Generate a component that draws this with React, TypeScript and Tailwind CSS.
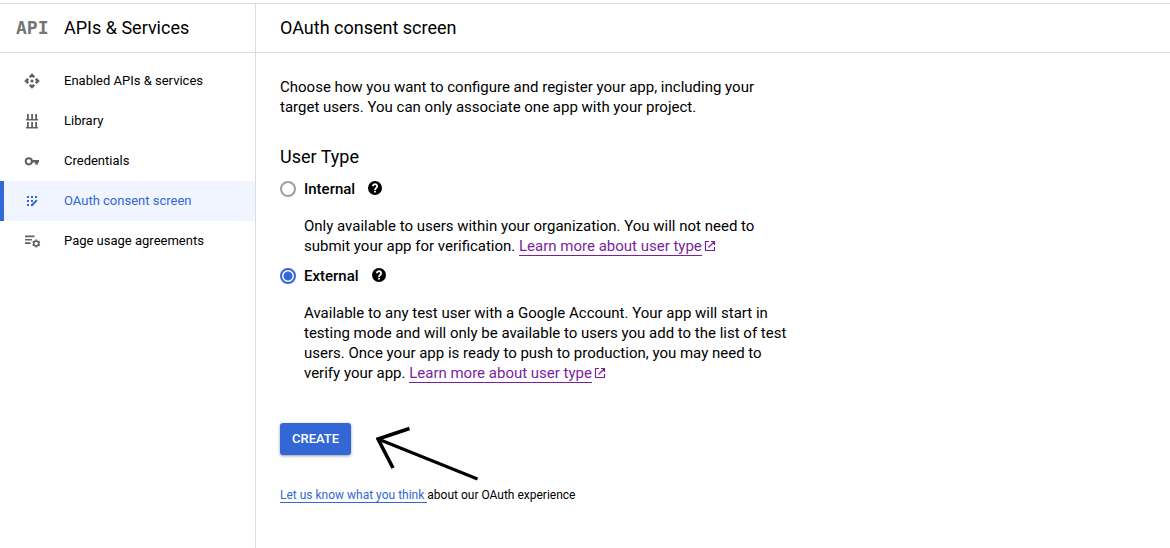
import { useState, type ReactNode } from "react";

function ApiIcon() {
  return (
    <svg width="16" height="16" viewBox="0 0 16 16" fill="currentColor" aria-hidden="true">
      <path d="M8 .2 11.100 3.200 9.600 5.100 8 3.900 6.400 5.100 4.900 3.200zM8 15.800 11.100 12.800 9.600 10.900 8 12.100 6.400 10.900 4.900 12.800zM.2 8 3.200 4.900 5.100 6.400 3.900 8 5.100 9.600 3.200 11.100zM15.800 8 12.800 4.900 10.900 6.400 12.100 8 10.900 9.600 12.800 11.100z" />
      <circle cx="8" cy="8" r="1.6" />
    </svg>
  );
}

function LibraryIcon() {
  return (
    <svg width="16" height="16" viewBox="0 0 16 16" fill="currentColor" aria-hidden="true">
      <path d="M2 6h12v1.400H2zM3 1h1.800v5H3zM7.200 1H9v5H7.200zM11.200 1H13v5h-1.800zM2 14h12v1.400H2zM3 9h1.800v5H3zM7.200 9H9v5H7.200zM11.200 9H13v5h-1.800z" />
    </svg>
  );
}

function KeyIcon() {
  return (
    <svg width="16" height="16" viewBox="0 0 16 16" aria-hidden="true">
      <circle cx="4.8" cy="8.3" r="3.1" fill="none" stroke="currentColor" strokeWidth="2" />
      <path d="M7.6 7H15v2.600h-1v2h-2.800v-2H7.600z" fill="currentColor" />
    </svg>
  );
}

function ConsentIcon() {
  return (
    <svg width="16" height="16" viewBox="0 0 16 16" fill="currentColor" aria-hidden="true">
      <path d="M3 3h2v2H3zM7 3h2v2H7zM11 3h2v2h-2zM3 7h2v2H3zM7 7h2v2H7zM3 11h2v2H3zM7 13.200v-1.800L12.200 6.400l1.400 1.400L8.500 13.200z" />
    </svg>
  );
}

function AgreementsIcon() {
  return (
    <svg width="18" height="16" viewBox="0 0 18 16" aria-hidden="true">
      <path d="M1 2.500h9.500v1.800H1zM1 6h7v1.600H1zM1 9.300h5.500v1.700H1z" fill="currentColor" />
      <g fill="none" stroke="currentColor">
        <circle cx="12.2" cy="10.5" r="2.5" strokeWidth="1.6" />
        <path
          d="M12.2 6.400v1.400M12.2 13.200v1.400M8.650 8.450l1.200.7M14.550 11.850l1.200.7M8.650 12.550l1.200-.7M14.550 9.150l1.200-.7"
          strokeWidth="1.8"
        />
      </g>
    </svg>
  );
}

function HelpIcon() {
  return (
    <svg width="14" height="14" viewBox="0 0 14 14" aria-hidden="true">
      <circle cx="7" cy="7" r="7" fill="currentColor" />
      <path
        d="M4.9 5.300a2.100 2.100 0 1 1 3.300 1.700C7.400 7.600 7 7.900 7 8.900"
        fill="none"
        stroke="white"
        strokeWidth="1.8"
      />
      <path d="M6.100 9.800h1.800v1.800H6.100z" fill="white" />
    </svg>
  );
}

function ExternalIcon() {
  return (
    <svg
      width="12"
      height="12"
      viewBox="0 0 12 12"
      fill="none"
      stroke="#7b1fa2"
      strokeWidth="1.2"
      className="ml-[2px] inline-block align-[-1px]"
      aria-hidden="true"
    >
      <path d="M5 1.500H1.500v9h9V7M7 1.500h3.500V5M10.500 1.500l-6 6" />
    </svg>
  );
}

const navItems: { label: string; icon: ReactNode; active?: boolean }[] = [
  { label: "Enabled APIs & services", icon: <ApiIcon /> },
  { label: "Library", icon: <LibraryIcon /> },
  { label: "Credentials", icon: <KeyIcon /> },
  { label: "OAuth consent screen", icon: <ConsentIcon />, active: true },
  { label: "Page usage agreements", icon: <AgreementsIcon /> },
];

function LearnMore() {
  return (
    <>
      <a href="#user-type" className="border-b border-[#7b1fa2] text-[#7b1fa2]">
        Learn more about user type
      </a>
      <ExternalIcon />
    </>
  );
}

function UserTypeOption(props: {
  value: string;
  label: string;
  checked: boolean;
  onSelect: () => void;
  children: ReactNode;
}) {
  return (
    <div className="mt-[10px]">
      <div className="flex h-5 items-center">
        <input
          type="radio"
          id={props.value}
          name="user-type"
          checked={props.checked}
          onChange={props.onSelect}
          className="size-4 appearance-none rounded-full border-2 border-[#9e9e9e] bg-white checked:border-[#3367d6] checked:bg-[radial-gradient(circle,#3367d6_4px,white_5px)]"
        />
        <label htmlFor={props.value} className="ml-2 font-medium">
          {props.label}
        </label>
        <button type="button" aria-label={"About " + props.label} className="ml-[13px] pb-[2px]">
          <HelpIcon />
        </button>
      </div>
      <p className="mt-[17px] ml-6">{props.children}</p>
    </div>
  );
}

export default function App() {
  const [userType, setUserType] = useState("external");

  return (
    <div className="flex min-h-screen flex-col bg-white pt-[3px] font-['Roboto',sans-serif] text-[15px] leading-5 text-black">
      <div className="flex flex-1 border-t border-[#dadce0]">
        <aside className="w-64 shrink-0 border-r border-[#dadce0]">
          <div className="flex h-[49px] items-center border-b border-[#dadce0] pl-4">
            <span
              className="w-12 font-['DejaVu_Sans_Mono',monospace] text-lg font-bold text-[#757575]"
              aria-hidden="true"
            >
              API
            </span>
            <h2 className="text-lg">APIs &amp; Services</h2>
          </div>
          <nav className="pt-2 text-[13px]">
            {navItems.map((item) => (
              <a
                key={item.label}
                href="#"
                aria-current={item.active ? "page" : undefined}
                className={
                  item.active
                    ? "flex h-10 items-center border-l-4 border-[#3367d6] bg-[#f0f5ff] pl-5 text-[#3367d6]"
                    : "flex h-10 items-center border-l-4 border-transparent pl-5"
                }
              >
                <span className={item.active ? "w-10 shrink-0" : "w-10 shrink-0 text-[#616161]"}>
                  {item.icon}
                </span>
                {item.label}
              </a>
            ))}
          </nav>
        </aside>

        <main className="min-w-0 flex-1">
          <header className="flex h-[49px] items-center border-b border-[#dadce0] px-6">
            <h1 className="text-lg">OAuth consent screen</h1>
          </header>
          <form className="max-w-[560px] p-6" onSubmit={(e) => e.preventDefault()}>
            <p className="max-w-[500px]">
              Choose how you want to configure and register your app, including your target users. You
              can only associate one app with your project.
            </p>
            <fieldset className="mt-7 max-w-[510px]">
              <legend className="text-lg leading-6">User Type</legend>
              <UserTypeOption
                value="internal"
                label="Internal"
                checked={userType === "internal"}
                onSelect={() => setUserType("internal")}
              >
                Only available to users within your organization. You will not need to submit your app
                for verification. <LearnMore />
              </UserTypeOption>
              <UserTypeOption
                value="external"
                label="External"
                checked={userType === "external"}
                onSelect={() => setUserType("external")}
              >
                Available to any test user with a Google Account. Your app will start in testing mode
                and will only be available to users you add to the list of test users. Once your app is
                ready to push to production, you may need to verify your app. <LearnMore />
              </UserTypeOption>
            </fieldset>
            <div className="relative mt-10 flex">
              <button
                type="submit"
                className="h-8 rounded-[3px] bg-[#3367d6] px-3 text-[13px] font-medium text-white shadow-[0_1px_3px_rgba(0,0,0,0.4)]"
              >
                CREATE
              </button>
              <svg
                width="108"
                height="60"
                viewBox="0 0 108 60"
                fill="none"
                stroke="black"
                className="absolute top-0 left-24"
                aria-hidden="true"
              >
                <path d="M2 16 101.500 56" strokeWidth="3" />
                <path d="M33.500 5.500 2 16 17 45" strokeWidth="3.6" />
              </svg>
            </div>
            <p className="mt-[30px] text-xs leading-5">
              <a href="#feedback" className="border-b border-[#3367d6] text-[#3367d6]">
                Let us know what you think{" "}
              </a>
              about our OAuth experience
            </p>
          </form>
        </main>
      </div>
    </div>
  );
}
